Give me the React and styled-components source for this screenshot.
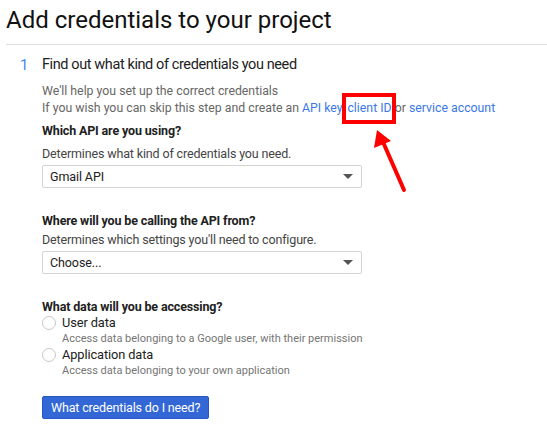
import React from 'react';
import styled, { createGlobalStyle } from 'styled-components';

const GlobalStyle = createGlobalStyle`
  body {
    margin: 0;
    background: #fff;
    font-family: Roboto, "Liberation Sans", Arial, sans-serif;
    color: #212121;
  }
`;

const Page = styled.div`
  position: relative;
  width: 547px;
  height: 429px;
  overflow: hidden;
  padding-left: 6px;
  box-sizing: border-box;
`;

const Title = styled.h1`
  margin: 0;
  padding-top: 4px;
  font-size: 24px;
  line-height: 32px;
  font-weight: 400;
  color: #111;
  padding-bottom: 8px;
  border-bottom: 1px solid #ddd;
`;

const Step = styled.section`
  display: grid;
  grid-template-columns: 36px 1fr;
  padding-top: 10px;
`;

const StepNumber = styled.div`
  font-size: 15px;
  line-height: 20px;
  color: #4285f4;
  padding-left: 14px;
`;

const StepBody = styled.div`
  display: flex;
  flex-direction: column;
`;

const StepTitle = styled.h2`
  margin: 0;
  font-size: 14.5px;
  letter-spacing: -0.4px;
  line-height: 20px;
  font-weight: 400;
  color: #212121;
`;

const Intro = styled.p`
  margin: 8px 0 0;
  font-size: 12.3px;
  line-height: 17px;
  color: #666;
`;

const Link = styled.a`
  color: #3b78e7;
  text-decoration: none;
`;

const Marked = styled(Link)`
  position: relative;
  &::after {
    content: '';
    position: absolute;
    left: -5px;
    right: -4px;
    top: -8px;
    bottom: -9px;
    border: 4px solid #f00;
  }
`;

const Question = styled.div`
  display: flex;
  flex-direction: column;
  margin-top: ${p => p.$top}px;
`;

const Label = styled.div`
  font-size: 12.5px;
  letter-spacing: -0.15px;
  line-height: 18px;
  font-weight: 700;
  color: #212121;
`;

const Hint = styled.div`
  font-size: 12.5px;
  letter-spacing: -0.15px;
  line-height: 18px;
  color: #444;
  margin-top: ${p => p.$top}px;
`;

const Select = styled.div`
  display: flex;
  align-items: center;
  justify-content: space-between;
  width: 320px;
  height: 23px;
  box-sizing: border-box;
  margin-top: 2px;
  padding: 0 8px 0 7px;
  border: 1px solid #d4d4d4;
  border-radius: 2px;
  font-size: 12.5px;
  letter-spacing: -0.1px;
  color: #212121;
  background: #fff;
`;

const Caret = styled.span`
  width: 0;
  height: 0;
  border-left: 5px solid transparent;
  border-right: 5px solid transparent;
  border-top: 5px solid #555;
`;

const Options = styled.div`
  display: flex;
  flex-direction: column;
  gap: 1px;
  margin-top: -1px;
`;

const Option = styled.label`
  display: grid;
  grid-template-columns: 20px 1fr;
  align-items: center;
`;

const Radio = styled.span`
  width: 14px;
  height: 14px;
  box-sizing: border-box;
  border: 1px solid #c8c8c8;
  border-radius: 50%;
`;

const OptionTitle = styled.span`
  font-size: 12.8px;
  letter-spacing: -0.1px;
  line-height: 16px;
  color: #212121;
`;

const OptionText = styled.span`
  grid-column: 2;
  font-size: 11px;
  line-height: 15px;
  color: #757575;
`;

const Button = styled.button`
  align-self: flex-start;
  margin-top: 18px;
  height: 23px;
  padding: 0 8px;
  border: 1px solid #2a56c6;
  border-radius: 2px;
  background: #3367d6;
  color: #fff;
  font-family: inherit;
  font-size: 12.5px;
  letter-spacing: -0.15px;
`;

const Arrow = styled.svg`
  position: absolute;
  left: 366px;
  top: 124px;
`;

export default function App() {
  return (
    <Page>
      <GlobalStyle />
      <Title>Add credentials to your project</Title>
      <Step>
        <StepNumber>1</StepNumber>
        <StepBody>
          <StepTitle>Find out what kind of credentials you need</StepTitle>
          <Intro>
            We'll help you set up the correct credentials
            <br />
            If you wish you can skip this step and create an <Link>API key</Link>,{' '}
            <Marked>client ID</Marked> or <Link>service account</Link>
          </Intro>

          <Question $top={5}>
            <Label>Which API are you using?</Label>
            <Hint $top={5}>Determines what kind of credentials you need.</Hint>
            <Select>
              <span>Gmail API</span>
              <Caret />
            </Select>
          </Question>

          <Question $top={24}>
            <Label>Where will you be calling the API from?</Label>
            <Hint $top={1}>Determines which settings you'll need to configure.</Hint>
            <Select>
              <span>Choose...</span>
              <Caret />
            </Select>
          </Question>

          <Question $top={24}>
            <Label>What data will you be accessing?</Label>
            <Options>
              <Option>
                <Radio />
                <OptionTitle>User data</OptionTitle>
                <OptionText>Access data belonging to a Google user, with their permission</OptionText>
              </Option>
              <Option>
                <Radio />
                <OptionTitle>Application data</OptionTitle>
                <OptionText>Access data belonging to your own application</OptionText>
              </Option>
            </Options>
          </Question>

          <Button>What credentials do I need?</Button>
        </StepBody>
      </Step>

      <Arrow width="44" height="70" viewBox="0 0 44 70">
        <line x1="38" y1="66" x2="17" y2="18" stroke="#f00" strokeWidth="4" strokeLinecap="round" />
        <polygon points="11,6 8,24 25,17" fill="#f00" />
      </Arrow>
    </Page>
  );
}
